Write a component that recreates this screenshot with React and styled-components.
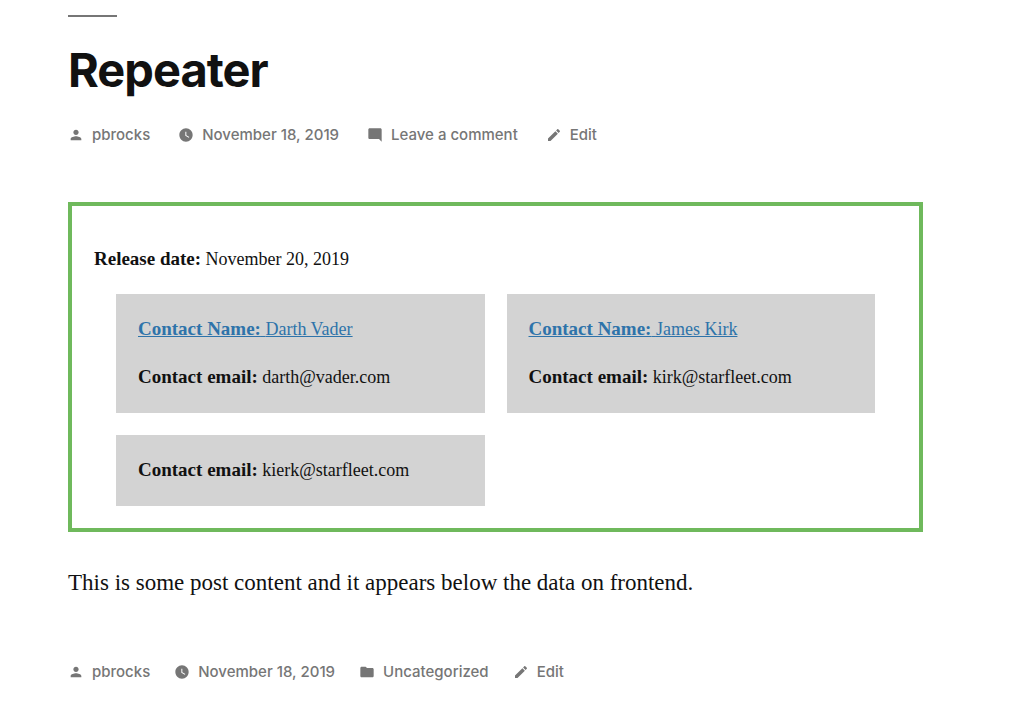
import React from "react";
import styled, { createGlobalStyle } from "styled-components";

const GlobalStyle = createGlobalStyle`
  *, *::before, *::after { box-sizing: border-box; }
  body {
    margin: 0;
    background: #fff;
    color: #111;
    font-family: Baskerville, "Liberation Serif", serif;
  }
`;

const Article = styled.article`
  padding: 15px 98px 32px 68px;
`;

const Title = styled.h1`
  margin: 0;
  font: 700 47px/60px Inter, sans-serif;
  letter-spacing: -1px;

  &::before {
    content: "";
    display: block;
    width: 49px;
    height: 2px;
    margin-bottom: 23px;
    background: #767676;
  }
`;

const Meta = styled.div`
  display: flex;
  flex-wrap: wrap;
  gap: ${(p) => p.$gap}px;
  margin-top: ${(p) => p.$top}px;
`;

const MetaItem = styled.span`
  display: flex;
  align-items: center;
  gap: 8px;
  color: #767676;
  font: 500 15px/24px Inter, sans-serif;
`;

const MetaLink = styled.a`
  color: inherit;
  text-decoration: none;
`;

const Icon = styled.svg`
  width: 16px;
  height: 16px;
  fill: currentColor;
`;

const DataBox = styled.section`
  margin-top: 55px;
  padding: 40px 22px 22px;
  border: 4px solid #6fb95c;
`;

const Field = styled.p`
  margin: 0;
  font-size: 18px;
  line-height: 27px;
`;

const Label = styled.strong`
  font-size: 19px;
  line-height: 19px;
`;

const Contacts = styled.div`
  display: grid;
  grid-template-columns: 1fr 1fr;
  gap: 22px;
  margin-top: 21px;
  padding: 0 22px;
`;

const Card = styled.div`
  display: flex;
  flex-direction: column;
  gap: 21px;
  padding: 22px;
  background: #d3d3d3;
`;

const ContactLink = styled.a`
  color: #2e73aa;
  text-decoration: underline;
`;

const Content = styled.p`
  margin: 31px 0 0;
  font-size: 23px;
  line-height: 40px;
`;

const paths = {
  person:
    "M12 12c2.21 0 4-1.79 4-4s-1.79-4-4-4-4 1.79-4 4 1.79 4 4 4zm0 2c-2.67 0-8 1.34-8 4v2h16v-2c0-2.66-5.33-4-8-4z",
  clock:
    "M12 2C6.5 2 2 6.5 2 12s4.5 10 10 10 10-4.5 10-10S17.5 2 12 2zm4.2 14.2L11 13V7h1.5v5.2l4.5 2.7-.8 1.3z",
  comment:
    "M21.99 4c0-1.1-.89-2-1.99-2H4c-1.1 0-2 .9-2 2v12c0 1.1.9 2 2 2h14l4 4-.01-18z",
  folder:
    "M10 4H4c-1.1 0-1.99.9-1.99 2L2 18c0 1.1.9 2 2 2h16c1.1 0 2-.9 2-2V8c0-1.1-.9-2-2-2h-8l-2-2z",
  edit:
    "M3 17.25V21h3.75L17.81 9.94l-3.75-3.75L3 17.25zM20.71 7.04c.39-.39.39-1.02 0-1.41l-2.34-2.34c-.39-.39-1.02-.39-1.41 0l-1.83 1.83 3.75 3.75 1.83-1.83z",
};

function MetaEntry({ icon, children }) {
  return (
    <MetaItem>
      <Icon viewBox="0 0 24 24" aria-hidden="true">
        <path d={paths[icon]} />
      </Icon>
      <MetaLink href="#">{children}</MetaLink>
    </MetaItem>
  );
}

const contacts = [
  { name: "Darth Vader", email: "darth@vader.com" },
  { name: "James Kirk", email: "kirk@starfleet.com" },
  { email: "kierk@starfleet.com" },
];

export default function App() {
  return (
    <>
      <GlobalStyle />
      <Article>
        <header>
          <Title>Repeater</Title>
          <Meta $gap={28} $top={23}>
            <MetaEntry icon="person">pbrocks</MetaEntry>
            <MetaEntry icon="clock">November 18, 2019</MetaEntry>
            <MetaEntry icon="comment">Leave a comment</MetaEntry>
            <MetaEntry icon="edit">Edit</MetaEntry>
          </Meta>
        </header>
        <DataBox>
          <Field>
            <Label>Release date:</Label> November 20, 2019
          </Field>
          <Contacts>
            {contacts.map((c) => (
              <Card key={c.email}>
                {c.name && (
                  <Field>
                    <ContactLink href="#">
                      <Label>Contact Name:</Label> {c.name}
                    </ContactLink>
                  </Field>
                )}
                <Field>
                  <Label>Contact email:</Label> {c.email}
                </Field>
              </Card>
            ))}
          </Contacts>
        </DataBox>
        <Content>
          This is some post content and it appears below the data on frontend.
        </Content>
        <footer>
          <Meta $gap={24} $top={57}>
            <MetaEntry icon="person">pbrocks</MetaEntry>
            <MetaEntry icon="clock">November 18, 2019</MetaEntry>
            <MetaEntry icon="folder">Uncategorized</MetaEntry>
            <MetaEntry icon="edit">Edit</MetaEntry>
          </Meta>
        </footer>
      </Article>
    </>
  );
}
